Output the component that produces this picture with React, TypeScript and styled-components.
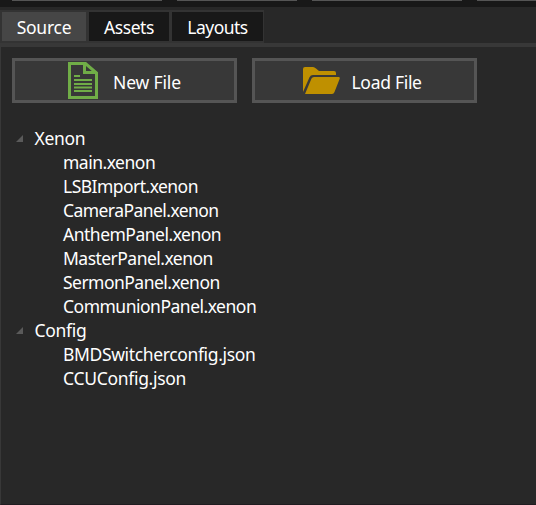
import React from "react";
import styled, { createGlobalStyle } from "styled-components";

const GlobalStyle = createGlobalStyle`
  * { box-sizing: border-box; }
  body {
    margin: 0;
    background: #282828;
    overflow: hidden;
  }
`;

const Window = styled.div`
  display: flex;
  flex-direction: column;
  width: 536px;
  height: 505px;
  background: #282828;
  color: #fff;
  font-family: "Noto Sans", "Open Sans", sans-serif;
  font-size: 17.5px;
  line-height: 24px;
  white-space: nowrap;
  overflow: hidden;
`;

const TopStrip = styled.div`
  display: flex;
  flex: none;
  gap: 15px;
  height: 7px;
  padding-left: 12px;
  background: #181818;
`;

const StripEdge = styled.div<{ $width: number }>`
  flex: none;
  width: ${(p) => p.$width}px;
  height: 1px;
  background: #555;
`;

const TabBar = styled.div`
  display: flex;
  flex: none;
  height: 36px;
  padding-top: 3px;
`;

const Tab = styled.button<{ $width: number; $active?: boolean }>`
  display: flex;
  align-items: center;
  justify-content: center;
  width: ${(p) => p.$width}px;
  height: 33px;
  padding: 0;
  border: solid #333;
  border-width: 2px 1px 2px 2px;
  background: ${(p) => (p.$active ? "#464646" : "#181818")};
  color: inherit;
  font: inherit;
`;

const Label = styled.span<{ $spacing?: number }>`
  letter-spacing: ${(p) => p.$spacing ?? 0}px;
`;

const Panel = styled.main`
  flex: 1;
  border: solid #383838;
  border-width: 4px 0 0 1px;
  border-bottom: 1px solid #201c20;
`;

const Actions = styled.div`
  display: flex;
  gap: 15px;
  padding: 11px 0 0 11px;
`;

const ActionButton = styled.button<{ $inset: number; $gap: number }>`
  display: flex;
  align-items: center;
  gap: ${(p) => p.$gap}px;
  width: 225px;
  height: 45px;
  padding: 0 0 0 ${(p) => p.$inset}px;
  border: 3px solid #555;
  background: #383838;
  color: inherit;
  font: inherit;

  ${Label} {
    padding-top: 2px;
  }
`;

const Tree = styled.ul`
  margin: 23px 0 0;
  padding: 0 0 0 15px;
  list-style: none;
`;

const Branch = styled.div`
  display: flex;
  align-items: center;
  height: 24px;
`;

const Expander = styled.svg`
  flex: none;
  width: 7px;
  height: 7px;
  margin-right: 11.5px;
`;

const Files = styled.ul`
  margin: 0;
  padding: 0 0 0 47px;
  list-style: none;
`;

const FileRow = styled.li`
  height: 24px;
`;

const DocumentIcon = () => (
  <svg width="30" height="37" viewBox="0 0 30 37" fill="none" stroke="#70ad47">
    <path d="M1.5 1.5H17.5L28.5 11V35.5H1.5Z" strokeWidth="3" />
    <path d="M16.5 1.5V10.5H28.5" strokeWidth="3" />
    <path d="M6 14H12M6 18H24M6 22H24M6 25.5H24M6 29H24" strokeWidth="2" />
  </svg>
);

const FolderIcon = () => (
  <svg width="37" height="27" viewBox="0 0 37 27" fill="#bf9000">
    <path d="M0 25V2Q0 0 2 0H10Q11.5 0 13 1.5L16 4H31Q33 4 33 6V8H10Q7.5 8 6.5 10.2Z" />
    <path d="M2 27L8.5 11.5Q9.2 10 11 10H35.5Q37.3 10 36.6 12L31.5 25Q30.8 27 29 27Z" />
  </svg>
);

const tree = [
  {
    name: "Xenon",
    spacing: -0.3,
    files: [
      { name: "main.xenon", spacing: -0.5 },
      { name: "LSBImport.xenon", spacing: -0.54 },
      { name: "CameraPanel.xenon", spacing: -0.56 },
      { name: "AnthemPanel.xenon", spacing: -0.5 },
      { name: "MasterPanel.xenon", spacing: -0.53 },
      { name: "SermonPanel.xenon", spacing: -0.53 },
      { name: "CommunionPanel.xenon", spacing: -0.5 },
    ],
  },
  {
    name: "Config",
    spacing: -0.3,
    files: [
      { name: "BMDSwitcherconfig.json", spacing: -0.36 },
      { name: "CCUConfig.json", spacing: -0.3 },
    ],
  },
];

export default function App() {
  return (
    <>
      <GlobalStyle />
      <Window>
        <TopStrip>
          <StripEdge $width={150} />
          <StripEdge $width={120} />
          <StripEdge $width={150} />
          <StripEdge $width={150} />
        </TopStrip>
        <TabBar>
          <Tab $width={87} $active><Label $spacing={-0.25}>Source</Label></Tab>
          <Tab $width={83}><Label $spacing={-0.45}>Assets</Label></Tab>
          <Tab $width={94}><Label $spacing={-0.5}>Layouts</Label></Tab>
        </TabBar>
        <Panel>
          <Actions>
            <ActionButton $inset={53} $gap={15}>
              <DocumentIcon />
              <Label $spacing={-0.15}>New File</Label>
            </ActionButton>
            <ActionButton $inset={48} $gap={11.5}>
              <FolderIcon />
              <Label $spacing={-0.3}>Load File</Label>
            </ActionButton>
          </Actions>
          <Tree>
            {tree.map((branch) => (
              <li key={branch.name}>
                <Branch>
                  <Expander viewBox="0 0 7 7">
                    <path d="M7 0V7H0Z" fill="#5a5a5a" />
                  </Expander>
                  <Label $spacing={branch.spacing}>{branch.name}</Label>
                </Branch>
                <Files>
                  {branch.files.map((file) => (
                    <FileRow key={file.name}>
                      <Label $spacing={file.spacing}>{file.name}</Label>
                    </FileRow>
                  ))}
                </Files>
              </li>
            ))}
          </Tree>
        </Panel>
      </Window>
    </>
  );
}
